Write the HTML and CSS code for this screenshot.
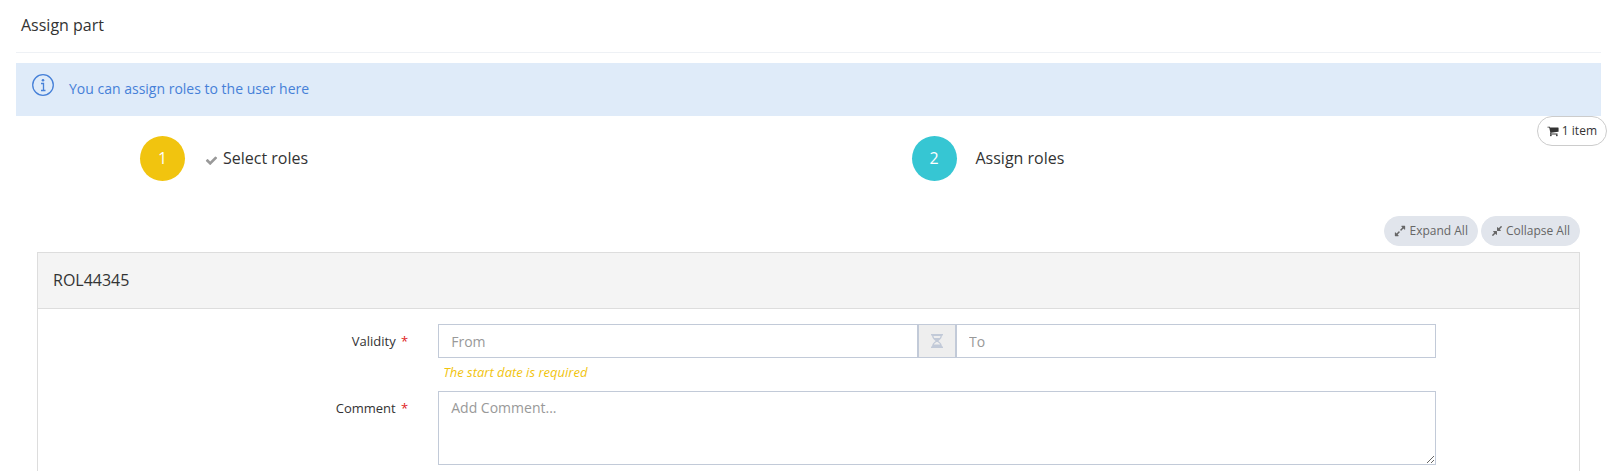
FILE: index.html
```html
<!DOCTYPE html>
<html lang="en">
<head>
<meta charset="utf-8">
<title>Assign part</title>
<link rel="stylesheet" href="styles.css">
</head>
<body>
<main class="page">
  <header class="page-header"><h1 class="page-title">Assign part</h1></header>
  <div class="banner-area">
    <div class="banner">
      <svg class="banner-icon" viewBox="0 0 22 22" aria-hidden="true">
        <circle cx="11" cy="11" r="10.3" fill="none" stroke="currentColor" stroke-width="1.3"/>
        <circle cx="11" cy="6.2" r="1.3" fill="currentColor"/>
        <path d="M9 9.500h2.500v6.500M9 16.500h4.500" fill="none" stroke="currentColor" stroke-width="1.3"/>
      </svg>
      <p class="banner-text">You can assign roles to the user here</p>
    </div>
    <button class="pill cart" type="button">
      <svg class="icon" viewBox="0 0 1792 1792" aria-hidden="true"><path d="M704 1536q0 52-38 90t-90 38-90-38-38-90 38-90 90-38 90 38 38 90zm896 0q0 52-38 90t-90 38-90-38-38-90 38-90 90-38 90 38 38 90zm128-1088v512q0 24-16.500 42.500t-40.500 21.500l-1044 122q13 60 13 70 0 16-24 64h920q26 0 45 19t19 45-19 45-45 19h-1024q-26 0-45-19t-19-45q0-11 8-31.500t16-36 21.500-40 15.500-29.500l-177-823h-204q-26 0-45-19t-19-45 19-45 45-19h256q16 0 28.500 6.500t19.500 15.500 13 24.500 8 26 5.500 29.500 4.500 26h1201q26 0 45 19t19 45z"/></svg>
      1 item
    </button>
  </div>
  <div class="content">
    <ol class="steps">
      <li class="step">
        <span class="step-number done">1</span>
        <span class="step-label"><svg class="check" viewBox="0 0 1792 1792" aria-hidden="true"><path d="M1671 566q0 40-28 68l-724 724-136 136q-28 28-68 28t-68-28l-136-136-362-362q-28-28-28-68t28-68l136-136q28-28 68-28t68 28l294 295 656-657q28-28 68-28t68 28l136 136q28 28 28 68z"/></svg>Select roles</span>
      </li>
      <li class="step">
        <span class="step-number current">2</span>
        <span class="step-label">Assign roles</span>
      </li>
    </ol>
    <div class="actions">
      <button class="pill" type="button">
        <svg class="icon" viewBox="0 0 1792 1792" aria-hidden="true"><path d="M883 1056q0 13-10 23l-332 332 144 144q19 19 19 45t-19 45-45 19h-448q-26 0-45-19t-19-45v-448q0-26 19-45t45-19 45 19l144 144 332-332q10-10 23-10t23 10l114 114q10 10 10 23zm781-864v448q0 26-19 45t-45 19-45-19l-144-144-332 332q-10 10-23 10t-23-10l-114-114q-10-10-10-23t10-23l332-332-144-144q-19-19-19-45t19-45 45-19h448q26 0 45 19t19 45z"/></svg>
        Expand All
      </button>
      <button class="pill" type="button">
        <svg class="icon" viewBox="0 0 1792 1792" aria-hidden="true"><path d="M896 960v448q0 26-19 45t-45 19-45-19l-144-144-332 332q-10 10-23 10t-23-10l-114-114q-10-10-10-23t10-23l332-332-144-144q-19-19-19-45t19-45 45-19h448q26 0 45 19t19 45zm755-672q0 13-10 23l-332 332 144 144q19 19 19 45t-19 45-45 19h-448q-26 0-45-19t-19-45v-448q0-26 19-45t45-19 45 19l144 144 332-332q10-10 23-10t23 10l114 114q10 10 10 23z"/></svg>
        Collapse All
      </button>
    </div>
    <section class="panel">
      <h2 class="panel-heading">ROL44345</h2>
      <form class="panel-body">
        <div class="form-row">
          <label class="form-label" for="from">Validity <span class="required">*</span></label>
          <div class="form-field">
            <div class="range">
              <input class="control" id="from" type="text" placeholder="From">
              <span class="range-icon">
                <svg viewBox="0 0 12 14" aria-hidden="true"><path d="M0 0h12v1.500H0zM0 12.500h12V14H0z"/><path fill-rule="evenodd" d="M1 1h10c0 3-1.500 4.500-3.600 6 2.100 1.500 3.600 3 3.600 6H1c0-3 1.500-4.500 3.600-6C2.500 5.500 1 4 1 1zM2.500 2c.1.800.3 1.400.7 2h5.600c.4-.6.600-1.200.7-2zM5.300 8C4 9 3.300 9.500 2.900 10.500h6.200C8.700 9.500 8 9 6.700 8z"/></svg>
              </span>
              <input class="control" id="to" type="text" placeholder="To" aria-label="To">
            </div>
            <p class="hint">The start date is required</p>
          </div>
        </div>
        <div class="form-row">
          <label class="form-label" for="comment">Comment <span class="required">*</span></label>
          <div class="form-field">
            <textarea class="control comment" id="comment" placeholder="Add Comment..."></textarea>
          </div>
        </div>
      </form>
    </section>
  </div>
</main>
</body>
</html>
```

FILE: styles.css
```css
* { box-sizing: border-box; }

body {
  margin: 0;
  background: #fff;
  color: #333;
  font: 14px/20px "Open Sans", sans-serif;
}

h1, h2, p, ol { margin: 0; padding: 0; }

.page {
  display: flex;
  flex-direction: column;
  min-height: 100vh;
  padding: 0 7px 0 16px;
}

.page-header {
  padding: 14px 5px 16px;
  border-bottom: 1px solid #eef1f5;
}

.page-title {
  font-size: 16px;
  font-weight: 400;
  line-height: 22px;
}

.banner-area {
  position: relative;
  margin-top: 10px;
}

.banner {
  display: flex;
  align-items: flex-start;
  gap: 15px;
  padding: 11px 16px 17px;
  background: #dfebf9;
  color: #4680d8;
}

.banner-icon { width: 22px; height: 22px; }
.banner-text { padding-top: 5px; }

.pill {
  display: inline-flex;
  align-items: center;
  gap: 3px;
  height: 30px;
  padding: 0 9px;
  border: 1px solid #e1e5ec;
  border-radius: 15px;
  background: #e1e5ec;
  color: #666;
  font: 12px/18px "Open Sans", sans-serif;
}

.icon { width: 12px; height: 12px; fill: currentColor; }

.cart {
  position: absolute;
  top: 100%;
  right: -6px;
  border-color: #ccc;
  background: #fff;
  color: #333;
}

.content {
  display: flex;
  flex: 1;
  flex-direction: column;
  padding: 20px 21px 0;
}

.steps {
  display: grid;
  grid-template-columns: 1fr 1fr;
  list-style: none;
}

.step {
  display: flex;
  align-items: center;
  gap: 19px;
  padding-left: 103px;
  font-size: 16px;
  line-height: 22px;
}

.step-number {
  width: 45px;
  height: 45px;
  border-radius: 50%;
  color: #fff;
  line-height: 44px;
  text-align: center;
}

.step-label { padding-bottom: 2px; }

.done { background: #f1c40f; }
.current { background: #36c6d3; }

.check {
  width: 13px;
  height: 13px;
  margin: 0 5px 0 1px;
  fill: #999;
  vertical-align: -3px;
}

.actions {
  display: flex;
  justify-content: flex-end;
  gap: 3px;
  padding: 35px 0 6px;
}

.panel {
  flex: 1;
  border: 1px solid #ddd;
  border-bottom: 0;
}

.panel-heading {
  padding: 16px 15px 17px;
  border-bottom: 1px solid #ddd;
  background: #f4f4f4;
  font-size: 16px;
  font-weight: 400;
  line-height: 22px;
}

.panel-body { padding: 15px 0 5px; }

.form-row {
  display: grid;
  grid-template-columns: 3fr 8fr 1fr;
}

.form-label {
  padding: 8px 15px 0;
  font-size: 13px;
  line-height: 18px;
  text-align: right;
}

.required {
  padding-left: 2px;
  color: #e02222;
}

.form-field { padding: 0 15px; }

.range { display: flex; }

.control {
  width: 100%;
  min-width: 0;
  height: 34px;
  padding: 6px 12px;
  border: 1px solid #c2cad8;
  border-radius: 0;
  background: #fff;
  color: #555;
  font: 14px/20px "Open Sans", sans-serif;
}

.range .control { flex: 1; }
.control::placeholder { color: #999; }

.range-icon {
  display: flex;
  align-items: center;
  justify-content: center;
  width: 38px;
  border: 1px solid #c2cad8;
  background: #eee;
}

.range-icon svg { width: 12px; height: 14px; fill: #c2cad8; }

.hint {
  padding: 5px 5px 10px;
  color: #f1c40f;
  font-size: 13px;
  font-style: italic;
  line-height: 18px;
}

.comment {
  display: block;
  height: 74px;
  resize: vertical;
}
```
